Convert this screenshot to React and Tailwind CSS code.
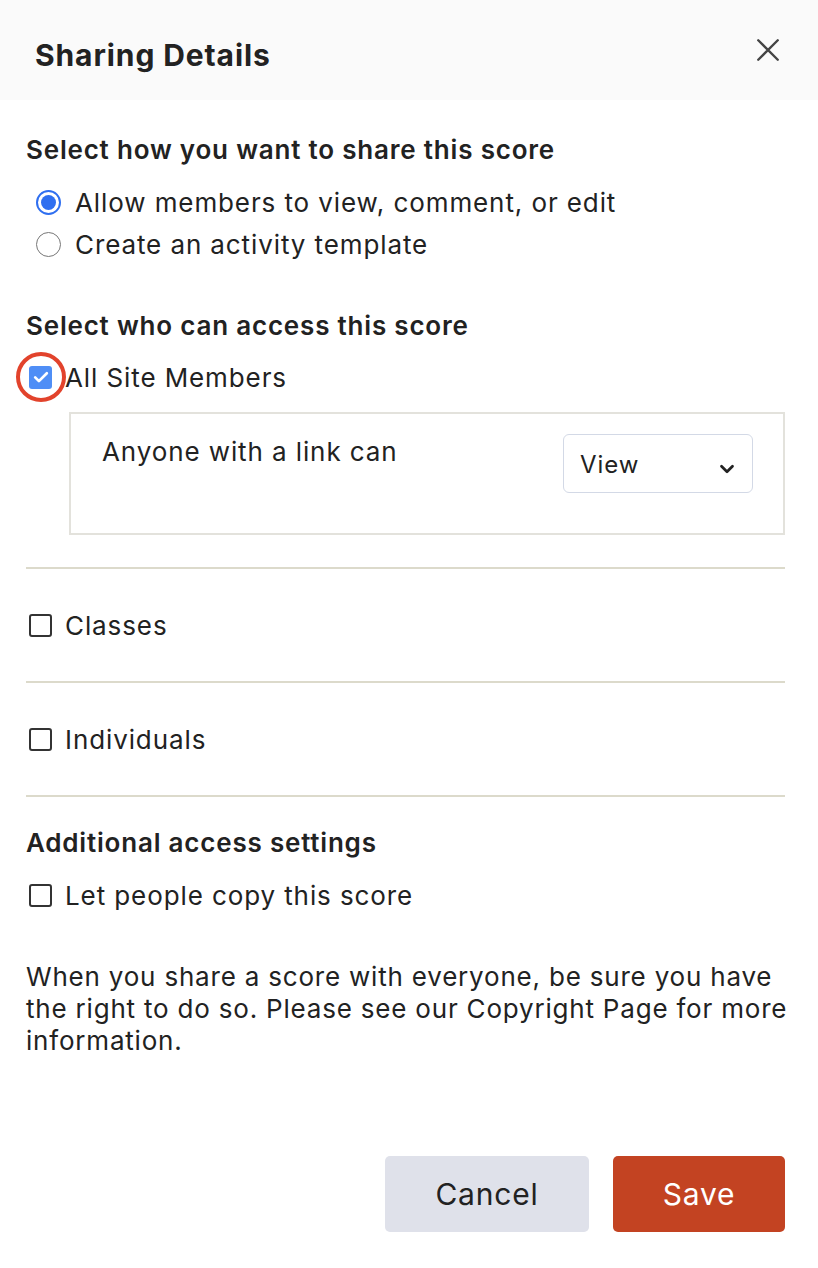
import { useState } from "react";

function Radio({ checked, label }) {
  return (
    <label className="flex h-[42px] items-center gap-[14px] pl-[10px]">
      {checked ? (
        <span className="flex h-[25px] w-[25px] items-center justify-center rounded-full border-[2.5px] border-[#2f6ff0] bg-white">
          <span className="h-[15px] w-[15px] rounded-full bg-[#2f6ff0]" />
        </span>
      ) : (
        <span className="h-[25px] w-[25px] rounded-full border-[1.5px] border-[#777] bg-white" />
      )}
      <span>{label}</span>
    </label>
  );
}

function Box({ checked }) {
  if (checked) {
    return (
      <span className="flex h-[23px] w-[23px] items-center justify-center rounded-[3px] bg-[#4f8ef6]">
        <svg viewBox="0 0 24 24" className="h-[20px] w-[20px]" fill="none" stroke="white" strokeWidth={3.2} strokeLinecap="round" strokeLinejoin="round">
          <path d="M5 12.5l4.5 4.5L19 7.5" />
        </svg>
      </span>
    );
  }
  return <span className="h-[23px] w-[23px] rounded-[3px] border-2 border-[#333] bg-white" />;
}

function CheckRow({ label, checked }) {
  return (
    <label className="flex h-[40px] items-center gap-[13px] pl-[3px]">
      <Box checked={checked} />
      <span>{label}</span>
    </label>
  );
}

export default function App() {
  const [access] = useState("View");

  return (
    <div
      className="min-h-[1268px] w-[818px] bg-white text-[26px] tracking-[0.9px] text-[#222]"
      style={{ fontFamily: "Inter, 'Noto Sans', sans-serif" }}
    >
      {/* Header */}
      <div className="flex h-[100px] items-center justify-between bg-[#fafafa] pl-[35px] pr-[37px]">
        <h1 className="mt-[10px] text-[30px] font-bold tracking-[0.9px] text-[#222]">Sharing Details</h1>
        <svg viewBox="0 0 24 24" className="h-[26px] w-[26px]" fill="none" stroke="#444" strokeWidth={2.2} strokeLinecap="round">
          <path d="M3 3l18 18M21 3L3 21" />
        </svg>
      </div>

      <div className="pl-[26px] pr-[33px]">
        <h2 className="mt-[34px] text-[26px] font-semibold leading-[32px] tracking-[0.8px]">
          Select how you want to share this score
        </h2>
        <div className="mt-[15px]">
          <Radio checked label="Allow members to view, comment, or edit" />
          <Radio label="Create an activity template" />
        </div>

        <h2 className="mt-[45px] text-[26px] font-semibold leading-[32px] tracking-[0.8px]">
          Select who can access this score
        </h2>
        <div className="relative mt-[15px]">
          <CheckRow checked label="All Site Members" />
          {/* highlight ring */}
          <span className="absolute left-[-10px] top-[-5px] h-[50px] w-[50px] rounded-full border-[4px] border-[#e2432c]" />
        </div>

        <div className="ml-[43px] mt-[15px] flex h-[123px] items-start justify-between border-2 border-[#e3e2dc] pl-[31px] pr-[30px] pt-[20px]">
          <span className="mt-[2px] leading-[32px]">Anyone with a link can</span>
          <button className="flex h-[59px] w-[190px] items-center justify-between rounded-[6px] border-[1.5px] border-[#d3d9e6] bg-white pl-[16px] pr-[14px] text-[24px] tracking-[0.9px] text-[#222]">
            <span className="mt-[2px]">{access}</span>
            <svg viewBox="0 0 24 24" className="mt-[10px] h-[22px] w-[22px]" fill="none" stroke="#222" strokeWidth={3} strokeLinecap="round" strokeLinejoin="round">
              <path d="M6 9l6 6 6-6" />
            </svg>
          </button>
        </div>

        <div className="mt-[32px] h-[2px] bg-[#dcdacb]" />
        <div className="mt-[36px]">
          <CheckRow label="Classes" />
        </div>
        <div className="mt-[36px] h-[2px] bg-[#dcdacb]" />
        <div className="mt-[36px]">
          <CheckRow label="Individuals" />
        </div>
        <div className="mt-[36px] h-[2px] bg-[#dcdacb]" />

        <h2 className="mt-[30px] text-[26px] font-semibold leading-[32px] tracking-[0.8px]">Additional access settings</h2>
        <div className="mt-[16px]">
          <CheckRow label="Let people copy this score" />
        </div>

        <p className="-mr-[10px] mt-[46px] leading-[32px] tracking-[0.8px]">
          When you share a score with everyone, be sure you have the right to do so. Please see our Copyright Page
          for more information.
        </p>

        <div className="mt-[99px] flex justify-end gap-[24px]">
          <button className="flex h-[76px] w-[204px] items-center justify-center rounded-[5px] bg-[#dfe1ea] text-[30px] tracking-[0.8px] text-[#222]">
            Cancel
          </button>
          <button className="flex h-[76px] w-[172px] items-center justify-center rounded-[5px] bg-[#c34322] text-[30px] tracking-[0.8px] text-white">
            Save
          </button>
        </div>
      </div>
    </div>
  );
}
